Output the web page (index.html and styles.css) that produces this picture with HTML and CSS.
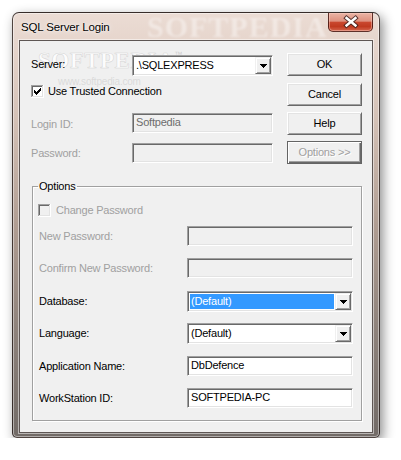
FILE: index.html
```html
<!DOCTYPE html>
<html>
<head>
<meta charset="utf-8">
<title>SQL Server Login</title>
<link rel="stylesheet" href="styles.css">
</head>
<body>
<div class="window">
  <div class="titlebar">
    <span class="wm-title">SOFTPEDIA</span>
    <span class="title">SQL Server Login</span>
    <div class="close">
      <svg width="45" height="19" viewBox="0 0 45 19">
        <path d="M18.5 5 L27.5 12.5 M27.5 5 L18.5 12.5" stroke="rgba(60,30,28,0.85)" stroke-width="4.4" stroke-linecap="square" fill="none"/>
        <path d="M18.5 5 L27.5 12.5 M27.5 5 L18.5 12.5" stroke="#fff" stroke-width="2.4" stroke-linecap="square" fill="none"/>
      </svg>
    </div>
  </div>
  <div class="client">
    <div class="wm-client">
      <span class="wm-big">SOFTPEDIA</span><span class="wm-tm">™</span>
      <span class="wm-url">www.softpedia.com</span>
    </div>
    <div class="top">
      <div class="fields">
        <div class="row r-server">
          <span class="lbl">Server:</span>
          <div class="combo w141">
            <div class="val"><span class="txt">.\SQLEXPRESS</span></div>
            <div class="drop"><svg width="7" height="4" viewBox="0 0 7 4" shape-rendering="crispEdges"><rect x="0" y="0" width="7" height="1"/><rect x="1" y="1" width="5" height="1"/><rect x="2" y="2" width="3" height="1"/><rect x="3" y="3" width="1" height="1"/></svg></div>
          </div>
        </div>
        <div class="row r-check">
          <svg class="cb" width="13" height="13" viewBox="0 0 13 13" shape-rendering="crispEdges">
            <rect x="0" y="0" width="13" height="13" fill="#fff"/>
            <rect x="0" y="0" width="12" height="1" fill="#a0a0a0"/><rect x="0" y="0" width="1" height="12" fill="#a0a0a0"/>
            <rect x="1" y="1" width="10" height="1" fill="#696969"/><rect x="1" y="1" width="1" height="10" fill="#696969"/>
            <rect x="1" y="11" width="11" height="1" fill="#e3e3e3"/><rect x="11" y="1" width="1" height="11" fill="#e3e3e3"/>
            <g fill="#000">
              <rect x="9" y="3" width="1" height="1"/><rect x="8" y="4" width="2" height="1"/>
              <rect x="3" y="5" width="1" height="1"/><rect x="7" y="5" width="3" height="1"/>
              <rect x="3" y="6" width="2" height="1"/><rect x="6" y="6" width="3" height="1"/>
              <rect x="3" y="7" width="5" height="1"/><rect x="4" y="8" width="3" height="1"/>
              <rect x="5" y="9" width="1" height="1"/>
            </g>
          </svg>
          <span class="cblabel">Use Trusted Connection</span>
        </div>
        <div class="row r-login">
          <span class="lbl dis">Login ID:</span>
          <div class="edit w141 disabled">Softpedia</div>
        </div>
        <div class="row r-pass">
          <span class="lbl dis">Password:</span>
          <div class="edit w141 disabled"></div>
        </div>
      </div>
      <div class="buttons">
        <button class="btn">OK</button>
        <button class="btn b-cancel">Cancel</button>
        <button class="btn b-help">Help</button>
        <button class="btn b-options is-default dis-btn">Options &gt;&gt;</button>
      </div>
    </div>

    <fieldset class="group">
      <legend>Options</legend>
      <div class="row g-check">
        <svg class="cb" width="13" height="13" viewBox="0 0 13 13" shape-rendering="crispEdges">
          <rect x="0" y="0" width="13" height="13" fill="#f0f0f0"/>
          <rect x="0" y="0" width="12" height="1" fill="#a0a0a0"/><rect x="0" y="0" width="1" height="12" fill="#a0a0a0"/>
          <rect x="1" y="1" width="10" height="1" fill="#696969"/><rect x="1" y="1" width="1" height="10" fill="#696969"/>
          <rect x="1" y="11" width="11" height="1" fill="#e3e3e3"/><rect x="11" y="1" width="1" height="11" fill="#e3e3e3"/>
          <rect x="0" y="12" width="13" height="1" fill="#fff"/><rect x="12" y="0" width="1" height="13" fill="#fff"/>
        </svg>
        <span class="cblabel2 dis">Change Password</span>
      </div>
      <div class="row grow g1">
        <span class="glbl dis">New Password:</span>
        <div class="edit w166 disabled"></div>
      </div>
      <div class="row grow g2">
        <span class="glbl dis">Confirm New Password:</span>
        <div class="edit w166 disabled"></div>
      </div>
      <div class="row grow g3">
        <span class="glbl">Database:</span>
        <div class="combo w166">
          <div class="val"><span class="txt sel">(Default)</span></div>
          <div class="drop"><svg width="7" height="4" viewBox="0 0 7 4" shape-rendering="crispEdges"><rect x="0" y="0" width="7" height="1"/><rect x="1" y="1" width="5" height="1"/><rect x="2" y="2" width="3" height="1"/><rect x="3" y="3" width="1" height="1"/></svg></div>
        </div>
      </div>
      <div class="row grow g4">
        <span class="glbl">Language:</span>
        <div class="combo w166">
          <div class="val"><span class="txt">(Default)</span></div>
          <div class="drop"><svg width="7" height="4" viewBox="0 0 7 4" shape-rendering="crispEdges"><rect x="0" y="0" width="7" height="1"/><rect x="1" y="1" width="5" height="1"/><rect x="2" y="2" width="3" height="1"/><rect x="3" y="3" width="1" height="1"/></svg></div>
        </div>
      </div>
      <div class="row grow g5">
        <span class="glbl">Application Name:</span>
        <div class="edit w166">DbDefence</div>
      </div>
      <div class="row grow g6">
        <span class="glbl">WorkStation ID:</span>
        <div class="edit w166">SOFTPEDIA-PC</div>
      </div>
    </fieldset>
  </div>
</div>
</body>
</html>
```

FILE: styles.css
```css
* { box-sizing: border-box; }
html, body { margin: 0; padding: 0; background: #fff; }
body {
  font-family: "Liberation Sans", Arial, sans-serif;
  font-size: 11px;
  line-height: 13px;
  letter-spacing: -0.2px;
  color: #000;
}

/* window frame */
.window {
  margin: 12px 0 0 12px;
  width: 368px;
  height: 426px;
  border: 1px solid rgba(40, 30, 28, 0.8);
  border-radius: 7px 7px 5px 5px;
  background: linear-gradient(180deg, #ebdcd4 0%, #e6d5cc 7%, #d4c1b6 25%, #b09d92 50%, #8e827b 75%, #726b67 100%);
  box-shadow: inset 0 0 0 1px rgba(255, 255, 255, 0.45), 3px 4px 12px rgba(0, 0, 0, 0.45);
  display: flex;
  flex-direction: column;
}
.titlebar {
  position: relative;
  flex: none;
  height: 27px;
  display: flex;
  align-items: flex-start;
  padding-left: 8px;
}
.title {
  position: relative;
  margin-top: 7px;
  font-size: 11.5px;
  line-height: 14px;
  letter-spacing: -0.15px;
  text-shadow: 0 0 6px rgba(255, 255, 255, 0.9), 0 0 2px rgba(255, 255, 255, 0.9);
}
.wm-title {
  position: absolute;
  left: 134px;
  top: -2px;
  font: bold 30px/32px "Liberation Serif", serif;
  letter-spacing: 1px;
  color: rgba(255, 255, 255, 0.4);
  filter: blur(1.3px);
}
.close {
  position: relative;
  margin-left: auto;
  margin-right: 6px;
  width: 45px;
  height: 19px;
  border: 1px solid rgba(70, 25, 20, 0.85);
  border-top: none;
  border-radius: 0 0 5px 5px;
  background: linear-gradient(180deg, #eab4a5 0%, #de917f 45%, #c9472e 52%, #c03a20 75%, #d4654d 100%);
  box-shadow: inset 0 0 0 1px rgba(255, 210, 200, 0.45);
}
.close svg { position: absolute; left: -1px; top: 0; }

/* client area */
.client {
  position: relative;
  flex: 1;
  margin: 0 6px 4px;
  background: #f0f0f0;
  border: 1px solid rgba(45, 35, 32, 0.75);
  box-shadow: 0 0 0 1px rgba(255, 255, 255, 0.5);
  padding: 12px 10px 0 11px;
}
.wm-client {
  position: absolute;
  left: 18px;
  top: 7px;
  pointer-events: none;
  color: rgba(255, 255, 255, 0.85);
}
.wm-big {
  font: bold 23px/26px "Liberation Serif", serif;
  letter-spacing: 0.5px;
  -webkit-text-stroke: 0.6px rgba(150, 150, 150, 0.35);
}
.wm-tm {
  font-size: 8px;
  vertical-align: top;
  color: rgba(170, 170, 170, 0.5);
}
.wm-url {
  display: block;
  margin: 3px 0 0 20px;
  font-size: 10px;
  line-height: 10px;
  color: rgba(200, 200, 200, 0.55);
}

.top {
  position: relative;
  display: flex;
  align-items: flex-start;
  gap: 14px;
}
.fields { width: 242px; }
.row { display: flex; align-items: flex-start; }
.lbl { width: 101px; flex: none; }
.dis { color: #a0a0a0; }

.r-server { margin-top: 2px; }
.r-server .lbl { padding-top: 3px; }
.r-check { margin-top: 9px; height: 13px; align-items: center; }
.cblabel { margin-left: 4px; }
.r-login { margin-top: 15px; }
.r-login .lbl { padding-top: 5px; }
.r-pass { margin-top: 10px; }
.r-pass .lbl { padding-top: 4px; }

.w141 { width: 141px; }
.w166 { width: 166px; }

/* sunken controls */
.edit, .combo {
  flex: none;
  border: 1px solid;
  border-color: #a0a0a0 #fff #fff #a0a0a0;
  box-shadow: inset 1px 1px 0 #696969, inset -1px -1px 0 #e3e3e3;
  background: #fff;
}
.edit {
  height: 20px;
  padding: 2px 3px 0;
  white-space: nowrap;
}
.edit.disabled { background: #f0f0f0; color: #6d6d6d; }
.combo {
  height: 21px;
  padding: 1px;
  display: flex;
}
.val {
  flex: 1;
  padding: 1px 1px 1px 1px;
  min-width: 0;
}
.txt {
  display: block;
  height: 15px;
  line-height: 15px;
  padding-left: 1px;
  white-space: nowrap;
}
.txt.sel { background: #3399ff; color: #fff; }
.drop {
  flex: none;
  width: 16px;
  height: 17px;
  border: 1px solid;
  border-color: #f0f0f0 #696969 #696969 #f0f0f0;
  box-shadow: inset 1px 1px 0 #fff, inset -1px -1px 0 #a0a0a0;
  background: #f0f0f0;
  display: flex;
  align-items: center;
  justify-content: center;
  padding-top: 1px;
}
.drop svg { display: block; fill: #000; }
.cb { display: block; flex: none; }

/* push buttons */
.buttons { display: flex; flex-direction: column; width: 75px; }
.btn {
  width: 75px;
  height: 23px;
  margin: 0;
  padding: 0;
  font: inherit;
  letter-spacing: inherit;
  line-height: 13px;
  color: #000;
  background: #f0f0f0;
  border: 1px solid;
  border-color: #fff #696969 #696969 #fff;
  box-shadow: inset 1px 1px 0 #e3e3e3, inset -1px -1px 0 #a0a0a0;
  border-radius: 0;
}
.b-cancel { margin-top: 7px; }
.b-help { margin-top: 6px; }
.b-options { margin-top: 6px; }
.btn.is-default {
  border: 1px solid #646464;
  box-shadow: inset 1px 1px 0 #fff, inset -1px -1px 0 #696969, inset -2px -2px 0 #a0a0a0;
}
.dis-btn { color: #a0a0a0; text-shadow: 1px 1px 0 #fff; }

/* options group */
.group {
  margin: 16px 0 0 1px;
  width: 330px;
  min-width: 0;
  border: 1px solid #a0a0a0;
  box-shadow: 1px 1px 0 #fff, inset 1px 1px 0 #fff;
  padding: 11px 8px 12px 6px;
}
.group legend {
  padding: 0 1px;
  margin-left: -1px;
  line-height: 13px;
}
.g-check { height: 13px; align-items: center; margin-left: -1px; }
.cblabel2 { margin-left: 5px; }
.glbl { width: 148px; flex: none; padding-top: 4px; }
.g1 { margin-top: 9px; }
.g2 { margin-top: 12px; }
.g3 { margin-top: 13px; }
.g4 { margin-top: 11px; }
.g5 { margin-top: 12px; }
.g6 { margin-top: 12px; }
```
